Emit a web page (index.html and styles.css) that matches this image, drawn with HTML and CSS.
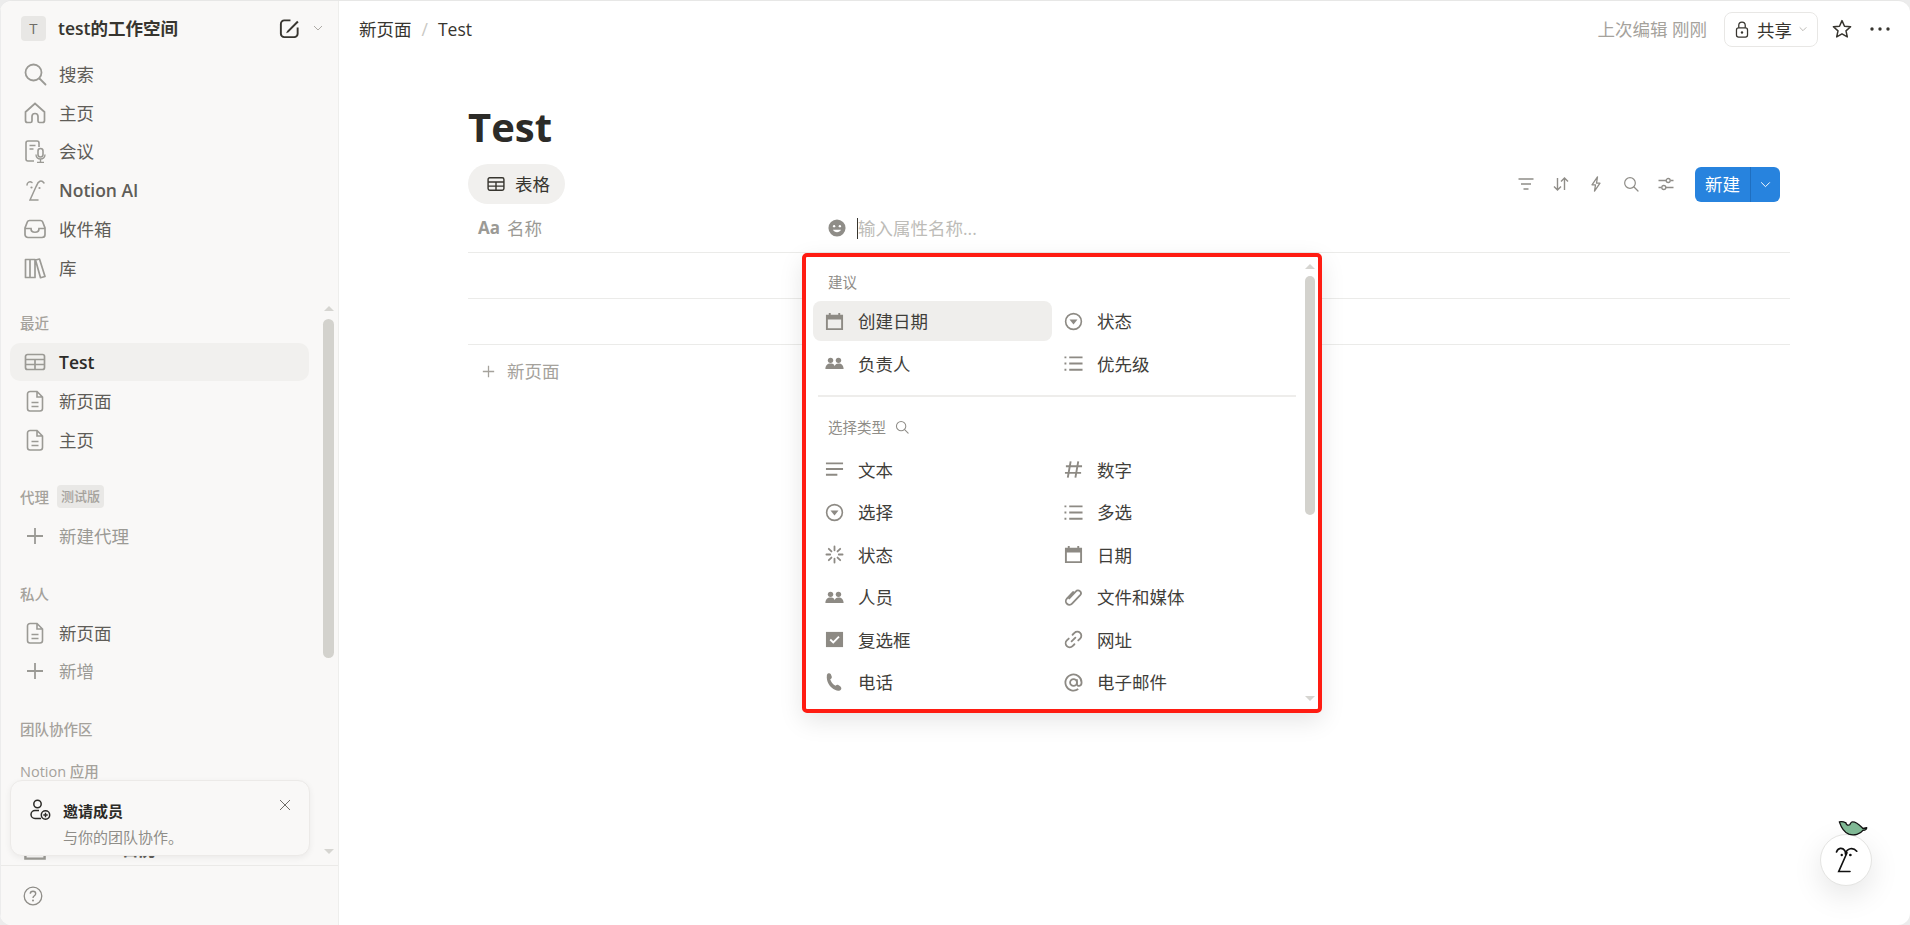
FILE: index.html
```html
<!DOCTYPE html>
<html lang="zh-CN">
  <head>
    <meta charset="utf-8" />
    <title>Test</title>
    <link rel="stylesheet" href="styles.css">
  </head>
  <body>
    <svg class="icon-defs" width="0" height="0">
      <symbol id="i-page" viewBox="0 0 24 24"><path d="M6.5 2.5h7.5l5.5 5.5v11.5a2.5 2.5 0 0 1-2.5 2.5h-10a2.5 2.5 0 0 1-2.5-2.5v-14.500a2.500 2.500 0 0 1 2.500-2.500zM14 2.500v5.500h5.500M8.500 13.500h7M8.500 17.500h7" fill="none" stroke="currentColor" stroke-width="1.600"/></symbol>
      <symbol id="i-table" viewBox="0 0 24 24"><path d="M4.500 4.500h15a2 2 0 0 1 2 2v11a2 2 0 0 1-2 2h-15a2 2 0 0 1-2-2v-11a2 2 0 0 1 2-2zM2.500 9.500h19M2.500 14.500h19M12 9.500v10" fill="none" stroke="currentColor" stroke-width="1.700"/></symbol>
      <symbol id="i-search" viewBox="0 0 24 24"><circle cx="10.500" cy="10.500" r="8" fill="none" stroke="currentColor" stroke-width="1.800"/><path d="M16.500 16.500l6 6" fill="none" stroke="currentColor" stroke-width="1.800" stroke-linecap="round"/></symbol>
      <symbol id="i-plus" viewBox="0 0 24 24"><path d="M12 4v16M4 12h16" fill="none" stroke="currentColor" stroke-width="1.800"/></symbol>
      <symbol id="i-chevron" viewBox="0 0 24 24"><path d="M4 8l8 8 8-8" fill="none" stroke="currentColor" stroke-width="1.800"/></symbol>
      <symbol id="i-calendar" viewBox="0 0 20 20"><path d="M1 3h3v-2h2v2h8v-2h2v2h3v16h-18zM3 8v9h14v-9z" fill="currentColor" fill-rule="evenodd"/></symbol>
      <symbol id="i-select" viewBox="0 0 20 20"><circle cx="10" cy="10" r="8.300" fill="none" stroke="currentColor" stroke-width="1.700"/><path d="M5.800 7.800h8.400l-4.200 5.400z" fill="currentColor"/></symbol>
      <symbol id="i-people" viewBox="0 0 24 20"><circle cx="7" cy="6" r="3.400" fill="currentColor"/><circle cx="17" cy="6" r="3.400" fill="currentColor"/><path d="M0.500 17c0-4.500 2.500-7 6.500-7s5 2 5 3.500c1-1.800 2-3.500 5-3.500 4 0 6.500 2.500 6.500 7z" fill="currentColor"/></symbol>
      <symbol id="i-list" viewBox="0 0 20 20"><path d="M5.500 3.500h14M5.500 10h14M5.500 16.500h14" fill="none" stroke="currentColor" stroke-width="2"/><path d="M0.500 2.500h2v2h-2zM0.500 9h2v2h-2zM0.500 15.500h2v2h-2z" fill="currentColor"/></symbol>
      <symbol id="i-hint" viewBox="0 0 24 24"><path d="M2 12c1 0 1.500-5 0-5" fill="none"/></symbol>
    </svg>

    <div class="app">
      <aside class="sidebar">
        <div class="workspace">
          <span class="workspace-logo">T</span>
          <span class="workspace-name">test的工作空间</span>
          <svg class="compose" viewBox="0 0 24 24"><path d="M13 3.500h-6.500a3.500 3.500 0 0 0-3.500 3.500v10.500a3.500 3.500 0 0 0 3.500 3.500h10.500a3.500 3.500 0 0 0 3.500-3.500v-6.500" fill="none" stroke="currentColor" stroke-width="2"/><path d="M9.500 14.500l10.500-10.500 1.500 1.500-10.500 10.500-2.500 1z" fill="currentColor"/></svg>
          <svg class="workspace-caret"><use href="#i-chevron"/></svg>
        </div>

        <div class="sidebar-scroll">
          <nav class="nav-list nav-main">
            <a class="nav-row">
              <svg class="nav-icon"><use href="#i-search"/></svg>
              <span>搜索</span>
            </a>
            <a class="nav-row">
              <svg class="nav-icon" viewBox="0 0 24 24"><path d="M12 2.500l9.500 8.500v8.500a2 2 0 0 1-2 2h-3a1.500 1.500 0 0 1-1.500-1.500v-4.500a3 3 0 0 0-6 0v4.500a1.500 1.500 0 0 1-1.500 1.500h-3a2 2 0 0 1-2-2v-8.500z" fill="none" stroke="currentColor" stroke-width="1.700"/></svg>
              <span>主页</span>
            </a>
            <a class="nav-row">
              <svg class="nav-icon" viewBox="0 0 24 24"><path d="M11 22h-6a2 2 0 0 1-2-2v-16a2 2 0 0 1 2-2h9a2 2 0 0 1 2 2v4M6.500 6.500h6M6.500 10h4" fill="none" stroke="currentColor" stroke-width="1.600"/><rect x="15" y="9.500" width="5" height="8.500" rx="2.500" fill="none" stroke="currentColor" stroke-width="1.600"/><path d="M13 15.500c0 6 9 6 9 0M17.500 20.500v2.500M14 23.500h7" fill="none" stroke="currentColor" stroke-width="1.400"/></svg>
              <span>会议</span>
            </a>
            <a class="nav-row">
              <svg class="nav-icon" viewBox="0 0 24 24"><path d="M4 7c0-3 3-4 5-2.500M13.500 8c1.500-5 5-6.500 7.500-3M14 6.500l-7 15.500h8" fill="none" stroke="currentColor" stroke-width="1.500" stroke-linecap="round"/><circle cx="8.500" cy="9.500" r="1.100" fill="currentColor"/><circle cx="16.500" cy="10" r="1.100" fill="currentColor"/></svg>
              <span class="nav-strong">Notion AI</span>
            </a>
            <a class="nav-row">
              <svg class="nav-icon" viewBox="0 0 24 24"><path d="M6.500 3.500h11c1 0 1.800.5 2.200 1.500l2.300 6v6.500a3 3 0 0 1-3 3h-14a3 3 0 0 1-3-3v-6.500l2.300-6c.4-1 1.200-1.500 2.200-1.500zM2 11.500h6c0 5 8 5 8 0h6" fill="none" stroke="currentColor" stroke-width="1.700"/></svg>
              <span>收件箱</span>
            </a>
            <a class="nav-row">
              <svg class="nav-icon" viewBox="0 0 24 24"><path d="M2.500 3.500h4.500v18h-4.500zM7 3.500h5v18h-5zM12.500 4l4-1 5.500 17.500-4.500 1.200z" fill="none" stroke="currentColor" stroke-width="1.700" stroke-linejoin="round"/></svg>
              <span>库</span>
            </a>
          </nav>

          <section class="section">
            <div class="section-label">最近</div>
            <div class="nav-list">
              <a class="nav-row nav-active">
                <svg class="nav-icon"><use href="#i-table"/></svg>
                <span class="nav-strong">Test</span>
              </a>
              <a class="nav-row">
                <svg class="nav-icon"><use href="#i-page"/></svg>
                <span>新页面</span>
              </a>
              <a class="nav-row">
                <svg class="nav-icon"><use href="#i-page"/></svg>
                <span>主页</span>
              </a>
            </div>
          </section>

          <section class="section">
            <div class="section-label">代理 <span class="beta">测试版</span></div>
            <div class="nav-list">
              <a class="nav-row nav-muted">
                <svg class="nav-icon"><use href="#i-plus"/></svg>
                <span>新建代理</span>
              </a>
            </div>
          </section>

          <section class="section">
            <div class="section-label">私人</div>
            <div class="nav-list">
              <a class="nav-row">
                <svg class="nav-icon"><use href="#i-page"/></svg>
                <span>新页面</span>
              </a>
              <a class="nav-row nav-muted">
                <svg class="nav-icon"><use href="#i-plus"/></svg>
                <span>新增</span>
              </a>
            </div>
          </section>

          <section class="section section-empty">
            <div class="section-label">团队协作区</div>
          </section>

          <section class="section">
            <div class="section-label">Notion 应用</div>
            <div class="nav-list">
              <a class="nav-row">
                <svg class="nav-icon"><use href="#i-page"/></svg>
                <span class="nav-strong">Notion 邮件</span>
              </a>
              <a class="nav-row">
                <svg class="nav-icon"><use href="#i-calendar"/></svg>
                <span class="nav-strong">Notion 日历</span>
              </a>
            </div>
          </section>

          <div class="sidebar-scrollbar">
            <span class="arrow-up"></span>
            <span class="thumb"></span>
            <span class="arrow-down"></span>
          </div>
        </div>

        <div class="sidebar-footer">
          <svg class="help" viewBox="0 0 20 20"><circle cx="10" cy="10" r="8.800" fill="none" stroke="currentColor" stroke-width="1.300"/><path d="M7.300 7.800c0-3.400 5.400-3.400 5.400 0 0 2-2.700 2-2.700 4.200" fill="none" stroke="currentColor" stroke-width="1.400"/><circle cx="10" cy="14.500" r="1" fill="currentColor"/></svg>
        </div>

        <div class="invite-card">
          <svg class="invite-icon" viewBox="0 0 22 22"><circle cx="8.500" cy="5" r="3.700" fill="none" stroke="currentColor" stroke-width="1.500"/><path d="M10 11.500h-4a4 4 0 0 0 0 8h6" fill="none" stroke="currentColor" stroke-width="1.500"/><circle cx="16.500" cy="16" r="4.200" fill="none" stroke="currentColor" stroke-width="1.500"/><path d="M16.500 13.800v4.400M14.300 16h4.400" fill="none" stroke="currentColor" stroke-width="1.400"/></svg>
          <div class="invite-text">
            <div class="invite-title">邀请成员</div>
            <div class="invite-sub">与你的团队协作。</div>
          </div>
          <svg class="invite-close" viewBox="0 0 12 12"><path d="M1 1l10 10M11 1l-10 10" fill="none" stroke="currentColor" stroke-width="1"/></svg>
        </div>
      </aside>

      <main class="main">
        <header class="topbar">
          <div class="crumbs">
            <span>新页面</span>
            <span class="crumb-sep">/</span>
            <span>Test</span>
          </div>
          <div class="top-actions">
            <span class="edited">上次编辑 刚刚</span>
            <button class="share">
              <svg class="lock" viewBox="0 0 16 20"><rect x="1.500" y="8" width="13" height="11" rx="2.500" fill="none" stroke="currentColor" stroke-width="1.500"/><path d="M4.200 8v-3a3.800 3.800 0 0 1 7.600 0v3" fill="none" stroke="currentColor" stroke-width="1.500"/><circle cx="8" cy="13.500" r="1.400" fill="currentColor"/></svg>
              共享
              <svg class="share-caret"><use href="#i-chevron"/></svg>
            </button>
            <svg class="star" viewBox="0 0 20 20"><path d="M10 1.600l2.500 5.600 6.100.6-4.600 4.100 1.300 6-5.300-3.100-5.300 3.100 1.300-6-4.600-4.100 6.100-.6z" fill="none" stroke="currentColor" stroke-width="1.500" stroke-linejoin="round"/></svg>
            <svg class="dots" viewBox="0 0 20 4"><circle cx="2" cy="2" r="1.700" fill="currentColor"/><circle cx="10" cy="2" r="1.700" fill="currentColor"/><circle cx="18" cy="2" r="1.700" fill="currentColor"/></svg>
          </div>
        </header>

        <div class="content">
          <h1 class="page-title">Test</h1>

          <div class="toolbar">
            <div class="view-tab">
              <svg class="view-icon"><use href="#i-table"/></svg>
              表格
            </div>
            <div class="tools">
              <svg class="tool" viewBox="0 0 16 16"><path d="M0.500 3h15M3 8h10M5.500 13h5" fill="none" stroke="currentColor" stroke-width="1.400"/></svg>
              <svg class="tool" viewBox="0 0 16 16"><path d="M4.500 2v12M1 10.500l3.500 3.500 3.500-3.500M11.500 14v-12M8 5.500l3.500-3.500 3.500 3.500" fill="none" stroke="currentColor" stroke-width="1.400"/></svg>
              <svg class="tool" viewBox="0 0 16 16"><path d="M9.500 0.800l-5.500 8h3.500l-1 6.400 5.500-8h-3.500z" fill="none" stroke="currentColor" stroke-width="1.300" stroke-linejoin="round"/></svg>
              <svg class="tool"><use href="#i-search"/></svg>
              <svg class="tool" viewBox="0 0 16 16"><path d="M0.500 4.500h7.500M12.500 4.500h3M0.500 11.500h3M8 11.500h7.500" fill="none" stroke="currentColor" stroke-width="1.300"/><circle cx="10.200" cy="4.500" r="2" fill="none" stroke="currentColor" stroke-width="1.300"/><circle cx="5.800" cy="11.500" r="2" fill="none" stroke="currentColor" stroke-width="1.300"/></svg>
              <div class="new-btn">
                <span class="new-label">新建</span>
                <span class="new-arrow"><svg><use href="#i-chevron"/></svg></span>
              </div>
            </div>
          </div>

          <div class="table-head">
            <div class="col-name">
              <span class="aa">Aa</span>
              名称
            </div>
            <div class="col-input">
              <svg class="emoji" viewBox="0 0 20 20"><circle cx="10" cy="10" r="9.500" fill="currentColor"/><circle cx="6.800" cy="8" r="1.300" fill="#fff"/><circle cx="13.200" cy="8" r="1.300" fill="#fff"/><path d="M5.500 12c1.500 3.500 7.500 3.500 9 0z" fill="#fff"/></svg>
              <span class="caret"></span>
              <span class="placeholder">输入属性名称...</span>
            </div>
          </div>
          <div class="table-row"></div>
          <div class="table-row"></div>
          <div class="add-row">
            <svg class="add-icon"><use href="#i-plus"/></svg>
            新页面
          </div>
        </div>

        <div class="prop-menu">
          <div class="menu-label">建议</div>
          <div class="menu-grid">
            <div class="menu-item menu-hover"><svg class="menu-icon"><use href="#i-calendar"/></svg>创建日期</div>
            <div class="menu-item"><svg class="menu-icon"><use href="#i-select"/></svg>状态</div>
            <div class="menu-item"><svg class="menu-icon"><use href="#i-people"/></svg>负责人</div>
            <div class="menu-item"><svg class="menu-icon"><use href="#i-list"/></svg>优先级</div>
          </div>
          <div class="menu-divider"></div>
          <div class="menu-label menu-label-search">
            选择类型
            <svg class="menu-search"><use href="#i-search"/></svg>
          </div>
          <div class="menu-grid">
            <div class="menu-item"><svg class="menu-icon" viewBox="0 0 20 20"><path d="M1 3.500h18M1 9.500h18M1 15.500h12" fill="none" stroke="currentColor" stroke-width="2"/></svg>文本</div>
            <div class="menu-item"><svg class="menu-icon" viewBox="0 0 20 20"><path d="M7 1.500l-3 17M15 1.500l-3 17M2 6.500h17M1 13.500h17" fill="none" stroke="currentColor" stroke-width="2"/></svg>数字</div>
            <div class="menu-item"><svg class="menu-icon"><use href="#i-select"/></svg>选择</div>
            <div class="menu-item"><svg class="menu-icon"><use href="#i-list"/></svg>多选</div>
            <div class="menu-item"><svg class="menu-icon" viewBox="0 0 20 20"><path d="M10 1.500v4M10 14.500v4M1.500 10h4M14.500 10h4M4 4l2.800 2.800M13.200 13.200l2.800 2.800M16 4l-2.800 2.800M6.800 13.200l-2.800 2.800" fill="none" stroke="currentColor" stroke-width="1.900" stroke-linecap="round"/></svg>状态</div>
            <div class="menu-item"><svg class="menu-icon"><use href="#i-calendar"/></svg>日期</div>
            <div class="menu-item"><svg class="menu-icon"><use href="#i-people"/></svg>人员</div>
            <div class="menu-item"><svg class="menu-icon" viewBox="0 0 20 20"><path d="M5.500 11l7-7.500a3 3 0 0 1 4.500 4l-8.500 9a3.800 3.800 0 0 1-5.500-5.300l6.500-7" fill="none" stroke="currentColor" stroke-width="1.900" stroke-linecap="round" transform="translate(0 0)"/></svg>文件和媒体</div>
            <div class="menu-item"><svg class="menu-icon" viewBox="0 0 20 20"><path d="M1 2h18v16h-18z" fill="currentColor"/><path d="M5.500 10l3.200 3 6-6" fill="none" stroke="#fff" stroke-width="2"/></svg>复选框</div>
            <div class="menu-item"><svg class="menu-icon" viewBox="0 0 20 20"><path d="M8 12l4-4M9 5l2-2a4.200 4.200 0 0 1 6 6l-2 2M11 15l-2 2a4.200 4.200 0 0 1-6-6l2-2" fill="none" stroke="currentColor" stroke-width="1.900" stroke-linecap="round"/></svg>网址</div>
            <div class="menu-item"><svg class="menu-icon" viewBox="0 0 20 20"><path d="M2 2c-1 7 3 13 9 16 2 1 5 1 6-1 .5-1 0-2-1-3l-2-1.500c-1-.5-2 0-3 1-3-2-4.500-4-5.500-7 1.500-.5 2-1.500 1.500-3l-1-2.500c-1-1-3-1-4 1z" fill="currentColor"/></svg>电话</div>
            <div class="menu-item"><svg class="menu-icon" viewBox="0 0 20 20"><circle cx="10" cy="10" r="3.600" fill="none" stroke="currentColor" stroke-width="1.900"/><path d="M13.600 6.500v5c0 3 4.900 3 4.900-1.500a8.500 8.500 0 1 0-3.500 6.900" fill="none" stroke="currentColor" stroke-width="1.900"/></svg>电子邮件</div>
          </div>
          <div class="menu-scrollbar">
            <span class="arrow-up"></span>
            <span class="thumb"></span>
          </div>
          <span class="arrow-down menu-arrow-down"></span>
        </div>

        <div class="ai-fab">
          <svg class="ai-leaf" viewBox="0 0 32 18"><path d="M1 2c3-1 5 0 7 1 0 2 2 3 4 2 1-1 1-3 3-3 5 0 8 4 11 7l4-1c0 2-2 3-4 3-3 4-9 6-15 4-5-2-8-7-10-13z" fill="#7fb894" stroke="#111" stroke-width="1.400" stroke-linejoin="round"/></svg>
          <svg class="ai-face" viewBox="0 0 32 36"><path d="M2 8c2-6 8-6 11-2 1 2 1 3 1 5M14 10c2-7 10-9 15-3M16 9l-11 25h15" fill="none" stroke="#111" stroke-width="2.200" stroke-linecap="round"/><circle cx="9" cy="12" r="1.600" fill="#111"/><circle cx="20.500" cy="12" r="1.800" fill="#111"/></svg>
        </div>
      </main>
    </div>
  </body>
</html>
```

FILE: styles.css
```css
* {
  box-sizing: border-box;
}

body {
  margin: 0;
  background-color: #ececec;
  color: #37352f;
  font-family: "Open Sans", "Noto Sans CJK SC", sans-serif;
  font-size: 17.5px;
  overflow: hidden;
}

.icon-defs {
  position: absolute;
}

.app {
  display: flex;
  width: 1910px;
  height: 925px;
  border-top: 1px solid #e7e7e6;
  border-radius: 12px;
  overflow: hidden;
  background-color: #fff;
}

/* sidebar */
.sidebar {
  position: relative;
  display: flex;
  flex-direction: column;
  width: 339px;
  flex: none;
  background-color: #f9f8f7;
  border-right: 1px solid #eeeeec;
  border-left: 1px solid #ececec;
}

.workspace {
  display: flex;
  align-items: center;
  height: 54px;
  padding-left: 20px;
  flex: none;
}
.workspace-logo {
  display: flex;
  align-items: center;
  justify-content: center;
  width: 25px;
  height: 25px;
  margin-right: 12px;
  border-radius: 4px;
  background-color: #e8e7e5;
  color: #6f6d68;
  font-size: 15px;
}
.workspace-name {
  flex-grow: 1;
  font-weight: 600;
  line-height: 24px;
}
.compose {
  width: 23px;
  height: 23px;
  color: #37352f;
  margin-right: 11px;
}
.workspace-caret {
  width: 12px;
  height: 12px;
  color: #a5a29c;
  margin-right: 14px;
}

.sidebar-scroll {
  position: relative;
  flex: 1;
  min-height: 0;
  overflow: hidden;
}
.nav-list {
  display: flex;
  flex-direction: column;
  gap: 1.25px;
}
.nav-main {
  margin-bottom: 24px;
}
.nav-row {
  display: flex;
  align-items: center;
  width: 299px;
  height: 37.5px;
  margin-left: 9px;
  padding-left: 13px;
  border-radius: 10px;
  color: #5f5d58;
  line-height: 24px;
}
.nav-icon {
  width: 24px;
  height: 24px;
  margin-right: 12px;
  flex: none;
  color: #9b9a95;
}
.nav-active {
  background-color: #f1f0ee;
  color: #2c2b28;
}
.nav-strong {
  font-weight: 600;
}
.nav-muted {
  color: #9b9a95;
}
.section {
  margin-bottom: 26px;
}
.section-empty {
  margin-bottom: 17px;
}
.section-label {
  display: flex;
  align-items: center;
  gap: 8px;
  height: 25px;
  margin-bottom: 8px;
  padding-left: 19px;
  color: #a5a29c;
  font-size: 14.5px;
  font-weight: 500;
}
.section-empty .section-label {
  margin-bottom: 0;
}
.beta {
  padding: 0 4px;
  height: 23px;
  line-height: 23px;
  border-radius: 4px;
  background-color: #e9e8e6;
  font-size: 13px;
}

.sidebar-scrollbar {
  position: absolute;
  top: 0;
  bottom: 0;
  left: 322px;
  width: 12px;
}
.thumb {
  position: absolute;
  left: 0;
  width: 11px;
  border-radius: 6px;
  background-color: #d3d2cd;
}
.sidebar-scrollbar .thumb {
  top: 264px;
  height: 339px;
}
.arrow-up,
.arrow-down {
  position: absolute;
  left: 1px;
  width: 0;
  height: 0;
  border-left: 5px solid transparent;
  border-right: 5px solid transparent;
}
.arrow-up {
  border-bottom: 5px solid #d6d5d1;
}
.arrow-down {
  border-top: 5px solid #d6d5d1;
}
.sidebar-scrollbar .arrow-up {
  top: 251px;
}
.sidebar-scrollbar .arrow-down {
  top: 794px;
}

.sidebar-footer {
  display: flex;
  align-items: center;
  flex: none;
  height: 60px;
  padding-left: 22px;
  border-top: 1px solid #ebeae8;
}
.help {
  width: 20px;
  height: 20px;
  color: #8f8d88;
}

.invite-card {
  position: absolute;
  left: 9px;
  bottom: 69px;
  display: flex;
  width: 300px;
  height: 76px;
  padding: 18px 18px 0 18px;
  border: 1px solid #eceae8;
  border-radius: 12px;
  background-color: #f9f8f7;
  box-shadow: 0 2px 6px rgba(0, 0, 0, 0.06);
}
.invite-icon {
  width: 22px;
  height: 22px;
  margin-right: 12px;
  flex: none;
  color: #2c2b28;
}
.invite-text {
  flex-grow: 1;
  font-size: 15px;
  line-height: 24px;
}
.invite-title {
  font-weight: 600;
  color: #2c2b28;
}
.invite-sub {
  margin-top: 2px;
  color: #8f8d88;
}
.invite-close {
  width: 12px;
  height: 12px;
  margin-top: 0;
  color: #6f6d68;
}

/* main area */
.main {
  position: relative;
  flex: 1;
  min-width: 0;
}
.topbar {
  display: flex;
  align-items: center;
  justify-content: space-between;
  height: 56px;
  padding-left: 20px;
  padding-right: 20px;
}
.crumbs {
  display: flex;
  align-items: center;
  gap: 10px;
  line-height: 24px;
}
.crumb-sep {
  color: #c9c8c4;
}
.top-actions {
  display: flex;
  align-items: center;
}
.edited {
  margin-right: 17px;
  color: #a5a29c;
  line-height: 24px;
}
.share {
  display: flex;
  align-items: center;
  width: 94px;
  height: 35px;
  padding: 0 0 0 10px;
  margin-right: 14px;
  border: 1px solid #e8e7e5;
  border-radius: 8px;
  background-color: #fff;
  color: #37352f;
  font-family: inherit;
  font-size: 17.5px;
}
.lock {
  width: 14px;
  height: 17px;
  margin-right: 8px;
}
.share-caret {
  width: 10px;
  height: 10px;
  margin-left: 6px;
  color: #a5a29c;
}
.star {
  width: 20px;
  height: 20px;
  margin-right: 18px;
  color: #37352f;
}
.dots {
  width: 20px;
  height: 4px;
  color: #37352f;
}

.content {
  margin-left: 129px;
  margin-right: 120px;
}
.page-title {
  margin: 46px 0 0;
  font-size: 40px;
  font-weight: 700;
  line-height: 48px;
  color: #2c2b28;
}
.toolbar {
  display: flex;
  align-items: center;
  justify-content: space-between;
  height: 40px;
  margin-top: 13px;
}
.view-tab {
  display: flex;
  align-items: center;
  width: 97px;
  height: 40px;
  padding-left: 18px;
  border-radius: 20px;
  background-color: #f1f0ee;
  line-height: 24px;
}
.view-icon {
  width: 20px;
  height: 20px;
  margin-right: 9px;
}
.tools {
  display: flex;
  align-items: center;
  margin-right: 10px;
}
.tool {
  width: 16px;
  height: 16px;
  margin-right: 19px;
  color: #8f8d88;
}
.new-btn {
  display: flex;
  width: 85px;
  height: 35px;
  border-radius: 6px;
  overflow: hidden;
  background-color: #2783de;
  color: #fff;
  margin-left: 2px;
}
.new-label {
  width: 55px;
  text-align: center;
  line-height: 35px;
}
.new-arrow {
  display: flex;
  align-items: center;
  justify-content: center;
  flex: 1;
  border-left: 1px solid #1f6fc0;
}
.new-arrow svg {
  width: 13px;
  height: 13px;
}

.table-head {
  display: flex;
  align-items: center;
  height: 49px;
  border-bottom: 1px solid #ebebe9;
  color: #9b9a95;
}
.col-name {
  display: flex;
  align-items: center;
  width: 360px;
  padding-left: 10px;
  line-height: 24px;
}
.aa {
  width: 29px;
  font-weight: 700;
  font-size: 17px;
}
.col-input {
  display: flex;
  align-items: center;
}
.emoji {
  width: 18px;
  height: 18px;
  margin-right: 11px;
  color: #8f8d88;
}
.caret {
  width: 1px;
  height: 21px;
  background-color: #37352f;
}
.placeholder {
  color: #bdbcb8;
  line-height: 24px;
}
.table-row {
  height: 46px;
  border-bottom: 1px solid #ebebe9;
}
.add-row {
  display: flex;
  align-items: center;
  height: 52px;
  padding-left: 12px;
  color: #a5a29c;
  line-height: 24px;
}
.add-icon {
  width: 17px;
  height: 17px;
  margin-right: 10px;
}

/* property type menu */
.prop-menu {
  position: absolute;
  left: 463px;
  top: 252px;
  width: 520px;
  height: 460px;
  padding: 0 7px;
  border: 4px solid #ff1c12;
  border-radius: 5px;
  background-color: #fff;
  box-shadow: 0 8px 24px rgba(0, 0, 0, 0.1);
  color: #3f3e3a;
}
.menu-label {
  display: flex;
  align-items: center;
  height: 24px;
  margin-top: 12px;
  padding-left: 15px;
  color: #8f8d88;
  font-size: 14.5px;
}
.menu-grid {
  display: grid;
  grid-template-columns: 239px 239px;
  grid-auto-rows: 40px;
  row-gap: 2.500px;
  margin-top: 8px;
}
.menu-item {
  display: flex;
  align-items: center;
  padding-left: 12px;
  border-radius: 8px;
  line-height: 24px;
}
.menu-hover {
  background-color: #efeeec;
}
.menu-icon {
  width: 19px;
  height: 19px;
  margin-right: 14px;
  flex: none;
  color: #8d8a84;
}
.menu-divider {
  height: 2px;
  margin: 11px 15px 0 5px;
  background-color: #eeedeb;
}
.menu-label-search {
  gap: 9px;
  margin-top: 18px;
}
.menu-search {
  width: 14px;
  height: 14px;
}
.menu-label-search + .menu-grid {
  margin-top: 11px;
}
.menu-scrollbar {
  position: absolute;
  top: 0;
  right: 3px;
  bottom: 0;
  width: 10px;
}
.menu-scrollbar .thumb {
  top: 19px;
  width: 10px;
  height: 239px;
}
.menu-scrollbar .arrow-up {
  left: 0;
  top: 7px;
}
.menu-arrow-down {
  left: auto;
  right: 3px;
  bottom: 8px;
}

.ai-fab {
  position: absolute;
  right: 38px;
  bottom: 39px;
  width: 52px;
  height: 52px;
  border: 1px solid #e4e4e2;
  border-radius: 50%;
  background-color: #fff;
  box-shadow: 0 10px 30px rgba(0, 0, 0, 0.1);
}
.ai-leaf {
  position: absolute;
  top: -15px;
  left: 17px;
  width: 31px;
  height: 17px;
}
.ai-face {
  position: absolute;
  top: 10px;
  left: 14px;
  width: 24px;
  height: 29px;
}
```
